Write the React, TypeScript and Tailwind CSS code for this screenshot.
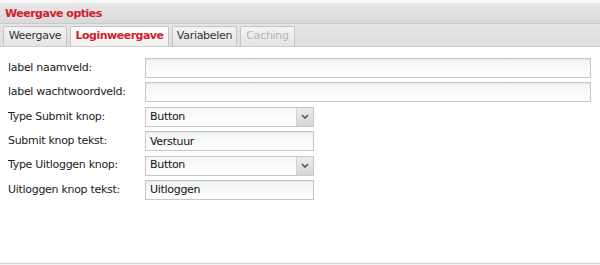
import React from 'react';

const font = "font-['Tahoma','Verdana','DejaVu_Sans',sans-serif] tracking-[-0.3px]";

const Tab = ({ label, w, active, disabled }: { label: string; w: string; active?: boolean; disabled?: boolean }) => (
  <div
    className={
      w +
      ' h-[20px] flex items-center justify-center border border-b-0 border-[#c4c4c4] rounded-t-[2px] text-[11px] ' +
      (active
        ? 'bg-gradient-to-b from-[#ffffff] to-[#f0f0f0] text-[#d0212b] font-bold tracking-[-0.5px]'
        : 'bg-gradient-to-b from-[#f4f4f4] to-[#e4e4e4] ' + (disabled ? 'text-[#b4b4b4]' : 'text-[#333]'))
    }
  >
    {label}
  </div>
);

const TextField = ({ value, wide }: { value?: string; wide?: boolean }) => (
  <input
    readOnly
    value={value ?? ''}
    className={
      'h-[20px] border border-[#c6c6c6] bg-gradient-to-b from-[#f1f4f4] to-[#ffffff] shadow-[inset_0_1px_1px_rgba(0,0,0,0.06)] px-[4px] text-[11px] text-[#111] outline-none ' +
      (wide ? 'w-[446px]' : 'w-[169px]')
    }
  />
);

const SelectField = ({ value }: { value: string }) => (
  <div className="h-[20px] w-[169px] flex border border-[#c6c6c6] bg-gradient-to-b from-[#f6f6f6] to-[#ffffff]">
    <span className="flex-1 flex items-center px-[4px] text-[11px] text-[#111]">{value}</span>
    <span className="w-[17px] flex items-center justify-center border-l border-[#d0d0d0] bg-gradient-to-b from-[#ececec] to-[#d6d6d6]">
      <svg width="8" height="5" viewBox="0 0 8 5">
        <path d="M1 1 L4 4 L7 1" fill="none" stroke="#555" strokeWidth="1.6" />
      </svg>
    </span>
  </div>
);

const rows: { label: string; kind: 'wide' | 'text' | 'select'; value?: string }[] = [
  { label: 'label naamveld:', kind: 'wide' },
  { label: 'label wachtwoordveld:', kind: 'wide' },
  { label: 'Type Submit knop:', kind: 'select', value: 'Button' },
  { label: 'Submit knop tekst:', kind: 'text', value: 'Verstuur' },
  { label: 'Type Uitloggen knop:', kind: 'select', value: 'Button' },
  { label: 'Uitloggen knop tekst:', kind: 'text', value: 'Uitloggen' },
];

export default function App() {
  return (
    <div className={'w-[600px] h-[265px] bg-white flex flex-col ' + font}>
      {/* title bar */}
      <div className="h-[24px] border-t-[3px] border-[#f7f7f7] bg-gradient-to-b from-[#e8e8e8] to-[#d9d9d9] border-b border-b-[#c9c9c9] flex items-center px-[5px]">
        <span className="text-[11px] font-bold text-[#d0212b] tracking-[-0.5px] pt-[2px]">Weergave opties</span>
      </div>

      {/* tabs */}
      <div className="h-[23px] bg-gradient-to-b from-[#e6e6e6] to-[#dedede] border-b border-[#cfcfcf] flex items-end gap-[3px] px-[3px]">
        <Tab label="Weergave" w="w-[64px]" />
        <Tab label="Loginweergave" w="w-[99px]" active />
        <Tab label="Variabelen" w="w-[65px]" />
        <Tab label="Caching" w="w-[55px]" disabled />
      </div>

      {/* form */}
      <div className="flex-1 flex flex-col gap-[4.4px] pt-[11px] px-[8px]">
        {rows.map((r) => (
          <div key={r.label} className="flex items-center">
            <span className="w-[137px] text-[11px] text-[#222]">{r.label}</span>
            {r.kind === 'select' ? (
              <SelectField value={r.value!} />
            ) : (
              <TextField value={r.value} wide={r.kind === 'wide'} />
            )}
          </div>
        ))}
      </div>

      <div className="h-[2px] border-t border-[#d4d4d4] bg-[#f2f2f2]" />
    </div>
  );
}
